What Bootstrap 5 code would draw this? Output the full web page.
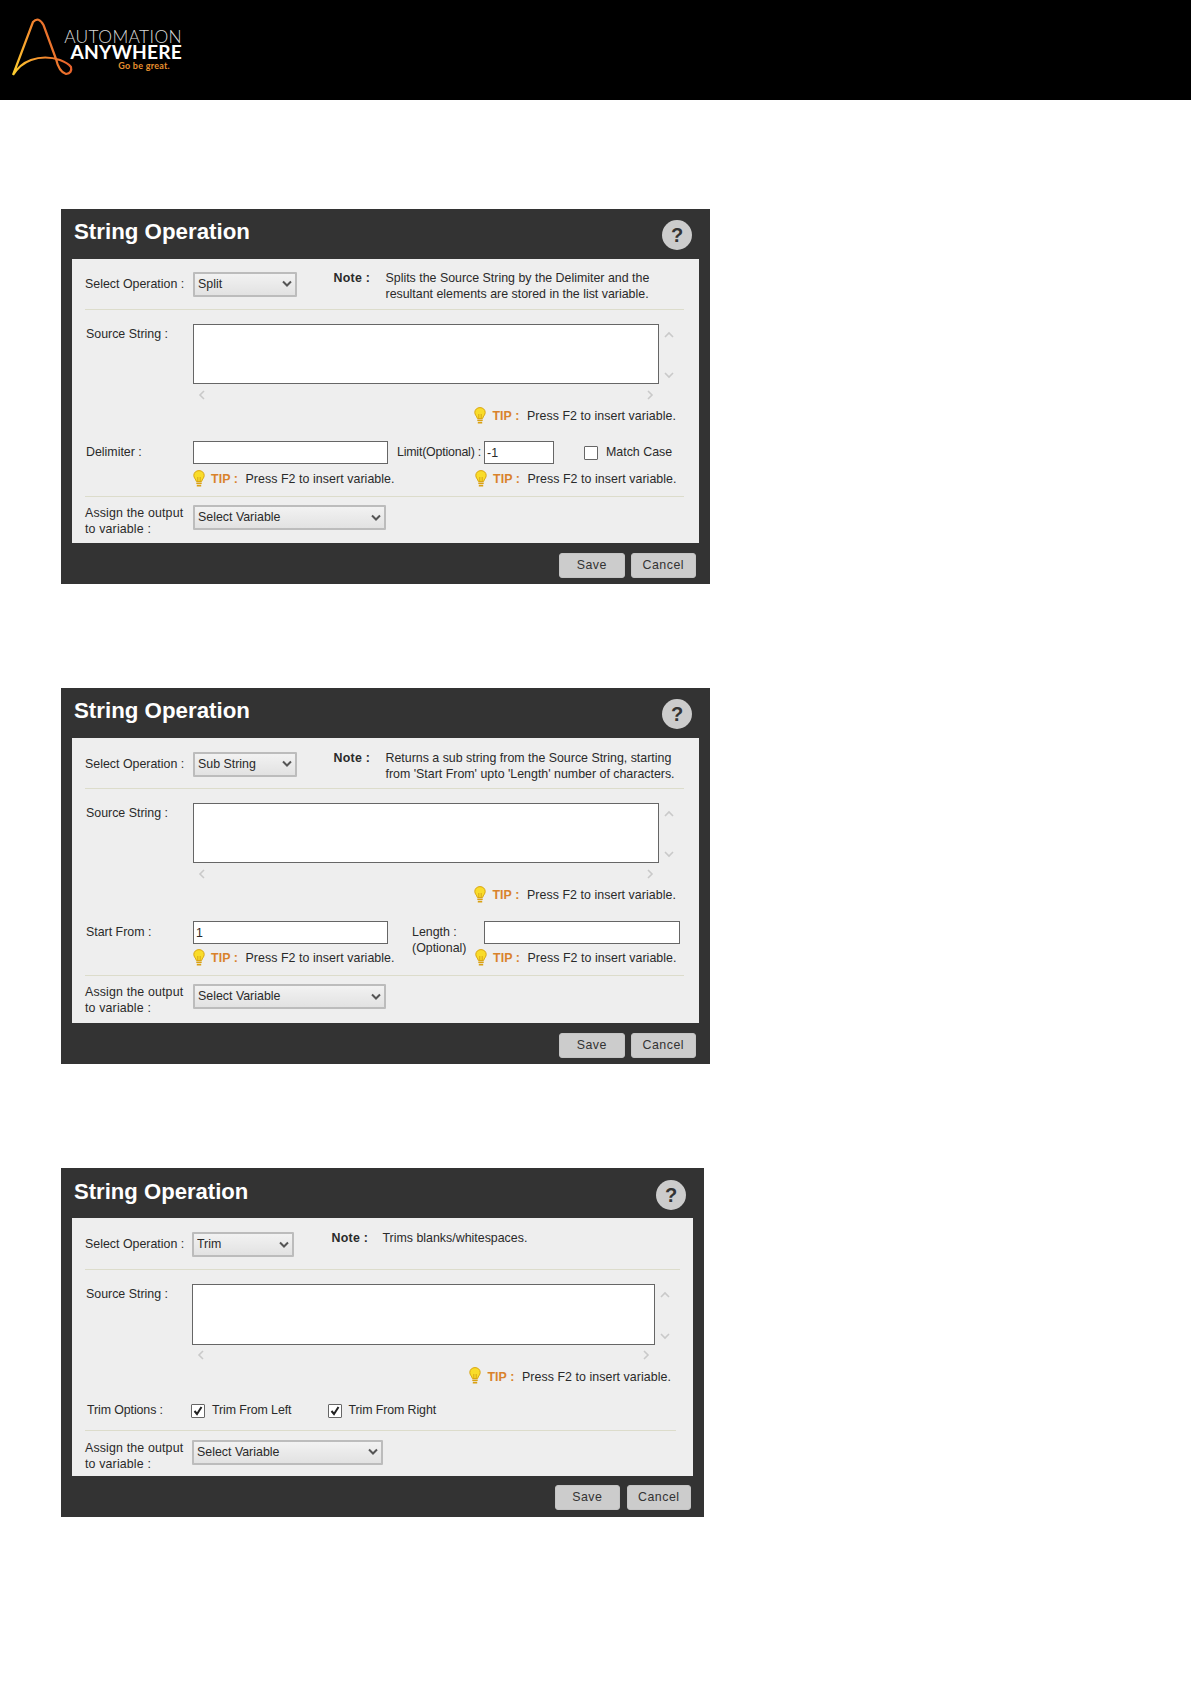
<!DOCTYPE html>
<html lang="en">
<head>
  <meta charset="UTF-8" />
  <meta name="viewport" content="width=device-width, initial-scale=1.0"/>
  <title>String Operation - Automation Anywhere</title>
  <link href="https://cdn.jsdelivr.net/npm/bootstrap@5.3.0/dist/css/bootstrap.min.css" rel="stylesheet" />
  <style>
    body {
      background-color: #fff;
      font-family: "Liberation Sans", Arial, sans-serif;
      font-size: 12.4px;
      color: #2a2a2a;
      height: 1684px;
    }

    /* top banner */
    .top-banner { height: 100px; background: #000; padding: 15px 0 0 11px; }
    .logo-text { width: 121px; margin-left: -14px; padding-top: 14px; text-align: right; font-family: Lato, "Liberation Sans", sans-serif; }
    .logo-line1 { font-size: 17.4px; line-height: 15px; font-weight: 300; color: #d8d8d8; letter-spacing: .35px; }
    .logo-line2 { font-size: 19.2px; line-height: 16px; font-weight: 700; color: #fff; letter-spacing: .2px; }
    .logo-line3 { font-size: 9px; line-height: 12px; font-weight: 700; color: #e8902f; padding-right: 12px; letter-spacing: .25px; }

    /* dialog */
    .op-dialog { width: 649px; margin: 0 0 104px 61px; background: #333; }
    .op-first { margin-top: 109px; }
    .op-title { height: 49.5px; padding: 0 18px 0 13px; }
    .op-title h2 { margin: 0 0 2px; font-size: 22.3px; font-weight: 700; color: #fff; font-family: "Liberation Sans", Arial, sans-serif; }
    .op-help { width: 30px; height: 30px; margin-top: 2px; background: #ccc; color: #333; font-size: 20px; font-weight: 700; }
    .op-panel { margin: 0 11.5px 0 11px; background: #eee; padding-bottom: 13.5px; }

    .op-head { height: 51px; margin: 0 14.5px 0 13px; padding-top: 11px; border-bottom: 1px solid #dcdccb; }
    .op-label { width: 108px; flex-shrink: 0; line-height: 24px; margin-top: 2px; white-space: nowrap; }
    .op-note-label { width: 51.5px; margin-left: 36.5px; font-weight: 700; line-height: 16px; flex-shrink: 0; letter-spacing: .25px; }
    .op-note { line-height: 16px; white-space: nowrap; margin-left: .5px; }

    .op-sel {
      height: 25px;
      width: 104px;
      margin-top: 2px;
      padding: 0 18px 0 3px;
      font-size: 12.4px;
      color: #2a2a2a;
      border: 2px solid #bcbcbc;
      border-radius: 1px;
      background-image: url("data:image/svg+xml,%3csvg xmlns='http://www.w3.org/2000/svg' viewBox='0 0 10 8'%3e%3cpath fill='none' stroke='%23555' stroke-width='2' d='M1 1.500l4 4 4-4'/%3e%3c/svg%3e"), linear-gradient(#f2f2f2, #e2e2e2);
      background-position: right 3px center, 0 0;
      background-size: 10px 8px, auto;
      background-repeat: no-repeat;
    }
    .op-sel-wide { width: 193px; margin-top: 0; }

    .op-source { margin: 14px 0 0 14px; }
    .op-source-label { width: 107px; line-height: 20px; }
    .op-area { width: 465.5px; height: 60.5px; min-height: 0; resize: none; border: 1px solid #666; border-radius: 0; box-shadow: none; }
    .op-vscroll { width: 12px; height: 60.5px; margin-left: 5px; padding: 6px 0 4px; }
    .op-hscroll { width: 465.5px; height: 21px; margin-left: 121px; padding: 0 4px; }
    .op-arrow { width: 10px; height: 10px; fill: none; stroke: #c9c9c9; stroke-width: 1.6; }

    .op-tips { height: 22px; margin-left: 121px; line-height: 22px; letter-spacing: .06px; }
    .op-tip-single { justify-content: flex-end; margin-right: 22.5px; }
    .op-tip { white-space: nowrap; }
    .op-tip-left { width: 282px; }
    .op-tip svg { width: 12px; height: 17px; margin: 0 6px 2px 0; }
    .op-tip b { display: inline-block; width: 34.5px; color: #d9822b; }

    .op-fields { height: 23px; margin: 14px 0 0 14px; }
    .op-fields + .op-tips { margin-top: 4px; }
    .op-fields-label { width: 107px; }
    .op-input { height: 23px; min-height: 0; padding: 0 2px; font-size: 12.4px; color: #2a2a2a; border: 1px solid #666; border-radius: 0; box-shadow: none; }
    .op-input-main { width: 195px; }
    .op-limit-label { width: 85px; margin-left: 9px; white-space: nowrap; letter-spacing: -.2px; }
    .op-input-limit { width: 70px; margin-left: 2px; }
    .form-check-input.op-check { width: 14px; height: 14px; margin: 0 8px 0 30px; border: 1px solid #666; border-radius: 1px; background-color: #fff; flex-shrink: 0; }
    .form-check-input.op-check:checked { background-color: #fff; border-color: #666; background-size: 12px; background-image: url("data:image/svg+xml,%3csvg xmlns='http://www.w3.org/2000/svg' viewBox='0 0 12 12'%3e%3cpath fill='none' stroke='%23222' stroke-width='2' d='M2.500 6l2.500 3 4.500-7'/%3e%3c/svg%3e"); }
    .op-length-label { width: 72px; height: 23px; margin-left: 24px; padding-top: 3px; line-height: 16px; white-space: nowrap; }
    .op-input-length { width: 196px; }

    .op-rule { height: 1px; margin: 6px 14.5px 0 13px; background: #dcdccb; }
    .op-assign { height: 24px; margin: 8px 0 0 13px; }
    .op-assign-label { width: 108px; line-height: 16px; white-space: nowrap; letter-spacing: .15px; }

    .op-actions { padding: 10.5px 14px 6px 0; gap: 6px; }
    .op-btn { width: 65.5px; height: 25px; padding: 0; font-size: 12.4px; line-height: 23px; letter-spacing: .5px; color: #333; background: #ccc; border: 1px solid #c4c4c4; border-radius: 3px; }

    /* second dialog runs a pixel taller */
    .op-tall .op-panel { padding-bottom: 14.5px; }
    .op-tall .op-head { padding-top: 12px; }
    .op-tall .op-fields { margin-top: 15px; }
    .op-tall .op-fields + .op-tips { margin-top: 3px; }

    /* third dialog is slightly narrower in the source */
    .op-narrow { width: 643px; margin-bottom: 0; }
    .op-narrow .op-title { height: 50px; }
    .op-narrow .op-title h2 { margin-bottom: 1px; font-size: 22.1px; }
    .op-narrow .op-help { margin-top: 4px; }
    .op-narrow .op-panel { margin-right: 11px; padding-bottom: 12px; }
    .op-narrow .op-head { height: 52px; margin-right: 13px; padding-top: 12px; }
    .op-narrow .op-label { width: 107px; }
    .op-narrow .op-sel { width: 102px; }
    .op-narrow .op-sel-wide { width: 191px; }
    .op-narrow .op-assign { margin-top: 9px; }
    .op-narrow .op-assign-label { width: 107px; }
    .op-narrow .op-source-label { width: 106px; }
    .op-narrow .op-note-label { width: 50.5px; margin-left: 37.5px; }
    .op-narrow .op-area, .op-narrow .op-hscroll { width: 463px; }
    .op-narrow .op-hscroll { margin-left: 120px; }
    .op-narrow .op-tip-single { margin-right: 22px; }
    .op-narrow .op-rule { margin: 8px 17px 0 13px; }
    .op-narrow .op-btn { width: 64.5px; }
    .op-narrow .op-actions { gap: 7px; padding: 9px 13px 7px 0; height: 41px; }
    .op-trim { height: 22px; margin: 12px 0 0 15px; letter-spacing: -.1px; }
    .op-trim-label { width: 104px; white-space: nowrap; }
    .op-trim .form-check-input.op-check { margin: 0 7px 0 0; }
    .op-trim-gap { width: 115.500px; }
  </style>
</head>
<body>
  <svg width="0" height="0" class="d-block">
    <defs>
      <symbol id="bulb" viewBox="0 0 12 17">
        <path d="M6 .6C2.900.6.800 2.800.800 5.400c0 2.500 2 3.800 2.600 6.100h5.200c.6-2.300 2.600-3.600 2.600-6.100C11.200 2.800 9.100.6 6 .6z" fill="#f9dc2a" stroke="#d9a514" stroke-width="1"/>
        <path d="M4.800 11V7M7.200 11V7" stroke="#c98f10" stroke-width=".7"/>
        <path d="M3.300 12.500h5.400v1.400H3.300zM3.800 14.800h4.400v1.600H3.800z" fill="#d9a012"/>
      </symbol>
      <symbol id="up" viewBox="0 0 10 10"><path d="M1 7l4-4 4 4"/></symbol>
      <symbol id="down" viewBox="0 0 10 10"><path d="M1 3l4 4 4-4"/></symbol>
      <symbol id="left" viewBox="0 0 10 10"><path d="M7 1L3 5l4 4"/></symbol>
      <symbol id="right" viewBox="0 0 10 10"><path d="M3 1l4 4-4 4"/></symbol>
    </defs>
  </svg>

  <header class="top-banner d-flex align-items-start">
    <svg width="64" height="62" viewBox="11 14 64 62">
      <defs>
        <linearGradient id="logoGrad" x1="0" y1="1" x2="1" y2="0.6">
          <stop offset="0" stop-color="#fdd02f"/>
          <stop offset="0.5" stop-color="#f7932e"/>
          <stop offset="1" stop-color="#e2552b"/>
        </linearGradient>
      </defs>
      <path d="M13 74L33 21Q38.500 15 43.500 24L56 58Q59 71 66 73Q72.500 72 71 66Q68 62 60 59Q45 54 31 59Q20 63 13 74" fill="none" stroke="url(#logoGrad)" stroke-width="2.200" stroke-linejoin="round"/>
    </svg>
    <div class="logo-text">
      <div class="logo-line1">AUTOMATION</div>
      <div class="logo-line2">ANYWHERE</div>
      <div class="logo-line3">Go be great.</div>
    </div>
  </header>

  <!-- Split -->
  <section class="op-dialog op-first">
    <div class="op-title d-flex justify-content-between align-items-center">
      <h2>String Operation</h2>
      <span class="op-help rounded-circle d-flex align-items-center justify-content-center">?</span>
    </div>
    <div class="op-panel">
      <div class="op-head d-flex align-items-start">
        <div class="op-label">Select Operation :</div>
        <select class="form-select op-sel"><option>Split</option></select>
        <div class="op-note-label">Note :</div>
        <div class="op-note">Splits the Source String by the Delimiter and the<br>resultant elements are stored in the list variable.</div>
      </div>
      <div class="op-source d-flex">
        <div class="op-source-label">Source String :</div>
        <textarea class="form-control op-area"></textarea>
        <div class="op-vscroll d-flex flex-column justify-content-between">
          <svg class="op-arrow"><use href="#up"/></svg>
          <svg class="op-arrow"><use href="#down"/></svg>
        </div>
      </div>
      <div class="op-hscroll d-flex justify-content-between align-items-center">
        <svg class="op-arrow"><use href="#left"/></svg>
        <svg class="op-arrow"><use href="#right"/></svg>
      </div>
      <div class="op-tips op-tip-single d-flex">
        <span class="op-tip d-flex align-items-center"><svg><use href="#bulb"/></svg><b>TIP :</b>Press F2 to insert variable.</span>
      </div>
      <div class="op-fields d-flex align-items-center">
        <div class="op-fields-label">Delimiter :</div>
        <input type="text" class="form-control op-input op-input-main">
        <div class="op-limit-label">Limit(Optional) :</div>
        <input type="text" class="form-control op-input op-input-limit" value="-1">
        <input type="checkbox" class="form-check-input op-check mt-0">
        <span>Match Case</span>
      </div>
      <div class="op-tips d-flex">
        <span class="op-tip op-tip-left d-flex align-items-center"><svg><use href="#bulb"/></svg><b>TIP :</b>Press F2 to insert variable.</span>
        <span class="op-tip d-flex align-items-center"><svg><use href="#bulb"/></svg><b>TIP :</b>Press F2 to insert variable.</span>
      </div>
      <div class="op-rule"></div>
      <div class="op-assign d-flex align-items-start">
        <div class="op-assign-label">Assign the output<br>to variable :</div>
        <select class="form-select op-sel op-sel-wide"><option>Select Variable</option></select>
      </div>
    </div>
    <div class="op-actions d-flex justify-content-end">
      <button type="button" class="btn op-btn">Save</button>
      <button type="button" class="btn op-btn">Cancel</button>
    </div>
  </section>

  <!-- Sub String -->
  <section class="op-dialog op-tall">
    <div class="op-title d-flex justify-content-between align-items-center">
      <h2>String Operation</h2>
      <span class="op-help rounded-circle d-flex align-items-center justify-content-center">?</span>
    </div>
    <div class="op-panel">
      <div class="op-head d-flex align-items-start">
        <div class="op-label">Select Operation :</div>
        <select class="form-select op-sel"><option>Sub String</option></select>
        <div class="op-note-label">Note :</div>
        <div class="op-note">Returns a sub string from the Source String, starting<br>from 'Start From' upto 'Length' number of characters.</div>
      </div>
      <div class="op-source d-flex">
        <div class="op-source-label">Source String :</div>
        <textarea class="form-control op-area"></textarea>
        <div class="op-vscroll d-flex flex-column justify-content-between">
          <svg class="op-arrow"><use href="#up"/></svg>
          <svg class="op-arrow"><use href="#down"/></svg>
        </div>
      </div>
      <div class="op-hscroll d-flex justify-content-between align-items-center">
        <svg class="op-arrow"><use href="#left"/></svg>
        <svg class="op-arrow"><use href="#right"/></svg>
      </div>
      <div class="op-tips op-tip-single d-flex">
        <span class="op-tip d-flex align-items-center"><svg><use href="#bulb"/></svg><b>TIP :</b>Press F2 to insert variable.</span>
      </div>
      <div class="op-fields d-flex align-items-center">
        <div class="op-fields-label">Start From :</div>
        <input type="text" class="form-control op-input op-input-main" value="1">
        <div class="op-length-label">Length :<br>(Optional)</div>
        <input type="text" class="form-control op-input op-input-length">
      </div>
      <div class="op-tips d-flex">
        <span class="op-tip op-tip-left d-flex align-items-center"><svg><use href="#bulb"/></svg><b>TIP :</b>Press F2 to insert variable.</span>
        <span class="op-tip d-flex align-items-center"><svg><use href="#bulb"/></svg><b>TIP :</b>Press F2 to insert variable.</span>
      </div>
      <div class="op-rule"></div>
      <div class="op-assign d-flex align-items-start">
        <div class="op-assign-label">Assign the output<br>to variable :</div>
        <select class="form-select op-sel op-sel-wide"><option>Select Variable</option></select>
      </div>
    </div>
    <div class="op-actions d-flex justify-content-end">
      <button type="button" class="btn op-btn">Save</button>
      <button type="button" class="btn op-btn">Cancel</button>
    </div>
  </section>

  <!-- Trim -->
  <section class="op-dialog op-narrow">
    <div class="op-title d-flex justify-content-between align-items-center">
      <h2>String Operation</h2>
      <span class="op-help rounded-circle d-flex align-items-center justify-content-center">?</span>
    </div>
    <div class="op-panel">
      <div class="op-head d-flex align-items-start">
        <div class="op-label">Select Operation :</div>
        <select class="form-select op-sel"><option>Trim</option></select>
        <div class="op-note-label">Note :</div>
        <div class="op-note">Trims blanks/whitespaces.</div>
      </div>
      <div class="op-source d-flex">
        <div class="op-source-label">Source String :</div>
        <textarea class="form-control op-area"></textarea>
        <div class="op-vscroll d-flex flex-column justify-content-between">
          <svg class="op-arrow"><use href="#up"/></svg>
          <svg class="op-arrow"><use href="#down"/></svg>
        </div>
      </div>
      <div class="op-hscroll d-flex justify-content-between align-items-center">
        <svg class="op-arrow"><use href="#left"/></svg>
        <svg class="op-arrow"><use href="#right"/></svg>
      </div>
      <div class="op-tips op-tip-single d-flex">
        <span class="op-tip d-flex align-items-center"><svg><use href="#bulb"/></svg><b>TIP :</b>Press F2 to insert variable.</span>
      </div>
      <div class="op-trim d-flex align-items-center">
        <div class="op-trim-label">Trim Options :</div>
        <input type="checkbox" class="form-check-input op-check mt-0" checked>
        <span class="op-trim-gap">Trim From Left</span>
        <input type="checkbox" class="form-check-input op-check mt-0" checked>
        <span>Trim From Right</span>
      </div>
      <div class="op-rule"></div>
      <div class="op-assign d-flex align-items-start">
        <div class="op-assign-label">Assign the output<br>to variable :</div>
        <select class="form-select op-sel op-sel-wide"><option>Select Variable</option></select>
      </div>
    </div>
    <div class="op-actions d-flex justify-content-end">
      <button type="button" class="btn op-btn">Save</button>
      <button type="button" class="btn op-btn">Cancel</button>
    </div>
  </section>

  <script src="https://cdn.jsdelivr.net/npm/bootstrap@5.3.0/dist/js/bootstrap.bundle.min.js"></script>
</body>
</html>
